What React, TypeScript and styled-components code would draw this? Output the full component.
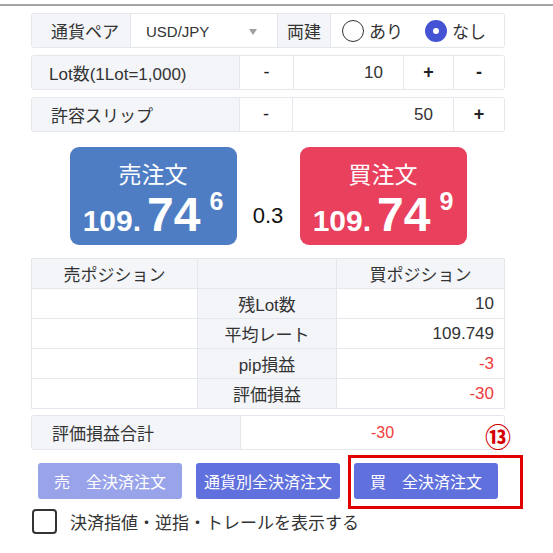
import React from "react";
import styled, { createGlobalStyle } from "styled-components";

const GlobalStyle = createGlobalStyle`
  html, body { margin: 0; padding: 0; background: #fff; }
  body {
    font-family: "Liberation Sans", "Noto Sans CJK JP", sans-serif;
    color: #333;
  }
`;

const BORDER = "#e4e7eb";
const GRAY = "#f3f5f8";

const Page = styled.div`
  width: 553px;
  height: 553px;
  overflow: hidden;
`;

const TopRule = styled.div`
  height: 2px;
  background: #a4a4a4;
  margin-top: 4px;
`;

const Panel = styled.div`
  margin: 7px 0 0 31px;
  width: 474px;
  display: flex;
  flex-direction: column;
`;

const Fields = styled.div`
  display: flex;
  flex-direction: column;
  gap: 7px;
`;

const FieldRow = styled.div<{ $mt?: number }>`
  display: flex;
  height: 35px;
  box-sizing: border-box;
  border: 1px solid ${BORDER};
  border-radius: 3px;
  overflow: hidden;
  margin-top: ${(p) => p.$mt ?? 0}px;
`;

const Cell = styled.div<{
  $w?: number;
  $gray?: boolean;
  $align?: "left" | "center" | "right";
  $pl?: number;
  $pr?: number;
}>`
  ${(p) => (p.$w ? `width: ${p.$w}px; flex: none;` : "flex: 1;")}
  box-sizing: border-box;
  display: flex;
  align-items: center;
  justify-content: ${(p) =>
    p.$align === "center" ? "center" : p.$align === "right" ? "flex-end" : "flex-start"};
  background: ${(p) => (p.$gray ? GRAY : "#fff")};
  padding-left: ${(p) => p.$pl ?? 0}px;
  padding-right: ${(p) => p.$pr ?? 0}px;
  font-size: 17px;
  color: #333;
  white-space: nowrap;
  & + & {
    border-left: 1px solid ${BORDER};
  }
`;

const SelectCell = styled(Cell)`
  justify-content: space-between;
  padding: 0 20px 0 15px;
  font-size: 15px;
  padding-top: 2px;
`;

const Caret = styled.span`
  width: 0;
  height: 0;
  border-left: 4px solid transparent;
  border-right: 4px solid transparent;
  border-top: 6px solid #a0a0a0;
`;

const RadioGroup = styled(Cell)`
  padding-left: 11px;
  gap: 0;
`;

const RadioOption = styled.label`
  display: flex;
  align-items: center;
  gap: 5px;
  font-size: 17px;
  color: #333;
  margin-right: 22px;
`;

const RadioDot = styled.span<{ $checked?: boolean }>`
  width: 22px;
  height: 22px;
  box-sizing: border-box;
  border-radius: 50%;
  border: ${(p) => (p.$checked ? "none" : "1.5px solid #333")};
  background: ${(p) => (p.$checked ? "#4453d4" : "#fff")};
  display: flex;
  align-items: center;
  justify-content: center;
  &::after {
    content: "";
    display: ${(p) => (p.$checked ? "block" : "none")};
    width: 6px;
    height: 6px;
    border-radius: 50%;
    background: #fff;
  }
`;

const StepBtn = styled(Cell)<{ $bold?: boolean }>`
  font-size: 18px;
  color: #222;
  font-weight: ${(p) => (p.$bold ? "bold" : "normal")};
`;

const CardsRow = styled.div`
  display: flex;
  justify-content: center;
  align-items: flex-start;
  margin-top: 15px;
  height: 98px;
`;

const PriceCard = styled.div<{ $side: "sell" | "buy" }>`
  width: 167px;
  height: 98px;
  box-sizing: border-box;
  border-radius: 9px;
  background: ${(p) => (p.$side === "sell" ? "#4f7dc4" : "#e8405d")};
  color: #fff;
  display: flex;
  flex-direction: column;
  align-items: center;
  padding-top: 12px;
`;

const CardTitle = styled.div`
  font-family: "Noto Sans CJK JP", sans-serif;
  font-size: 23px;
  line-height: 28px;
`;

const Price = styled.div`
  display: flex;
  align-items: baseline;
  line-height: 1;
  margin-top: 4px;
  font-family: "Liberation Sans", sans-serif;
  font-weight: bold;
`;

const PriceSmall = styled.span`
  font-size: 30px;
`;

const PriceBig = styled.span`
  font-size: 48px;
  margin-left: 6px;
`;

const PriceSup = styled.span`
  font-size: 25px;
  margin-left: 9px;
  align-self: flex-start;
  margin-top: -2px;
`;

const Spread = styled.div`
  width: 63px;
  text-align: center;
  font-size: 22px;
  line-height: 1;
  color: #111;
  margin-top: 58px;
`;

const PosTable = styled.div`
  display: grid;
  grid-template-columns: 166px 139px 1fr;
  grid-auto-rows: 30px;
  margin-top: 13px;
  border-top: 1px solid ${BORDER};
  border-left: 1px solid ${BORDER};
`;

const TCell = styled.div<{ $gray?: boolean; $align?: "center" | "right"; $red?: boolean }>`
  box-sizing: border-box;
  border-right: 1px solid ${BORDER};
  border-bottom: 1px solid ${BORDER};
  background: ${(p) => (p.$gray ? GRAY : "#fff")};
  display: flex;
  align-items: center;
  justify-content: ${(p) => (p.$align === "right" ? "flex-end" : "center")};
  padding-right: ${(p) => (p.$align === "right" ? 10 : 0)}px;
  font-size: 17px;
  color: ${(p) => (p.$red ? "#f03c3c" : "#333")};
`;

const TotalValue = styled(Cell)`
  font-size: 16px;
  color: #f03c3c;
  padding-left: 20px;
`;

const ButtonRow = styled.div`
  position: relative;
  display: flex;
  gap: 14px;
  padding-left: 7px;
  margin-top: 13px;
`;

const CloseBtn = styled.button<{ $muted?: boolean }>`
  width: 144px;
  height: 36px;
  border: none;
  border-radius: 3px;
  background: ${(p) => (p.$muted ? "#98a3ea" : "#6070dc")};
  color: #fff;
  font-family: "Noto Sans CJK JP", sans-serif;
  font-size: 16px;
  padding: 0;
  white-space: pre;
`;

const Highlight = styled.div`
  position: absolute;
  left: 317px;
  top: -8px;
  width: 175px;
  height: 54px;
  box-sizing: border-box;
  border: 3px solid #e00000;
  pointer-events: none;
`;

const Marker = styled.div`
  position: absolute;
  left: 454px;
  top: -40px;
  font-family: "Noto Sans CJK JP", sans-serif;
  font-weight: bold;
  font-size: 26px;
  line-height: 26px;
  color: #d40000;
`;

const CheckRow = styled.label`
  display: flex;
  align-items: center;
  gap: 13px;
  margin-top: 10px;
  margin-left: 1px;
  font-size: 17px;
  color: #333;
`;

const CheckBox = styled.span`
  width: 25px;
  height: 25px;
  box-sizing: border-box;
  border: 2px solid #333;
  border-radius: 4px;
  background: #fff;
`;

export default function App() {
  return (
    <Page>
      <GlobalStyle />
      <TopRule />
      <Panel>
        <Fields>
          <FieldRow>
            <Cell $w={98} $gray $pl={19}>通貨ペア</Cell>
            <SelectCell $w={147}>
              <span>USD/JPY</span>
              <Caret />
            </SelectCell>
            <Cell $w={53} $gray $align="center">両建</Cell>
            <RadioGroup>
              <RadioOption>
                <RadioDot />
                あり
              </RadioOption>
              <RadioOption>
                <RadioDot $checked />
                なし
              </RadioOption>
            </RadioGroup>
          </FieldRow>
          <FieldRow>
            <Cell $w={207} $gray $pl={17}>Lot数(1Lot=1,000)</Cell>
            <StepBtn $w={54} $align="center">-</StepBtn>
            <Cell $w={110} $align="right" $pr={20}>10</Cell>
            <StepBtn $w={50} $align="center" $bold>+</StepBtn>
            <StepBtn $align="center" $bold>-</StepBtn>
          </FieldRow>
          <FieldRow>
            <Cell $w={207} $gray $pl={19}>許容スリップ</Cell>
            <StepBtn $w={53} $align="center">-</StepBtn>
            <Cell $w={161} $align="right" $pr={20}>50</Cell>
            <StepBtn $align="center" $bold>+</StepBtn>
          </FieldRow>
        </Fields>

        <CardsRow>
          <PriceCard $side="sell">
            <CardTitle>売注文</CardTitle>
            <Price>
              <PriceSmall>109.</PriceSmall>
              <PriceBig>74</PriceBig>
              <PriceSup>6</PriceSup>
            </Price>
          </PriceCard>
          <Spread>0.3</Spread>
          <PriceCard $side="buy">
            <CardTitle>買注文</CardTitle>
            <Price>
              <PriceSmall>109.</PriceSmall>
              <PriceBig>74</PriceBig>
              <PriceSup>9</PriceSup>
            </Price>
          </PriceCard>
        </CardsRow>

        <PosTable>
          <TCell $gray>売ポジション</TCell>
          <TCell $gray />
          <TCell $gray>買ポジション</TCell>

          <TCell />
          <TCell $gray>残Lot数</TCell>
          <TCell $align="right">10</TCell>

          <TCell />
          <TCell $gray>平均レート</TCell>
          <TCell $align="right">109.749</TCell>

          <TCell />
          <TCell $gray>pip損益</TCell>
          <TCell $align="right" $red>-3</TCell>

          <TCell />
          <TCell $gray>評価損益</TCell>
          <TCell $align="right" $red>-30</TCell>
        </PosTable>

        <FieldRow $mt={6}>
          <Cell $w={208} $gray $pl={20}>評価損益合計</Cell>
          <TotalValue $align="center">-30</TotalValue>
        </FieldRow>

        <ButtonRow>
          <CloseBtn $muted>売　全決済注文</CloseBtn>
          <CloseBtn>通貨別全決済注文</CloseBtn>
          <CloseBtn>買　全決済注文</CloseBtn>
          <Highlight />
          <Marker>⑬</Marker>
        </ButtonRow>

        <CheckRow>
          <CheckBox />
          決済指値・逆指・トレールを表示する
        </CheckRow>
      </Panel>
    </Page>
  );
}
